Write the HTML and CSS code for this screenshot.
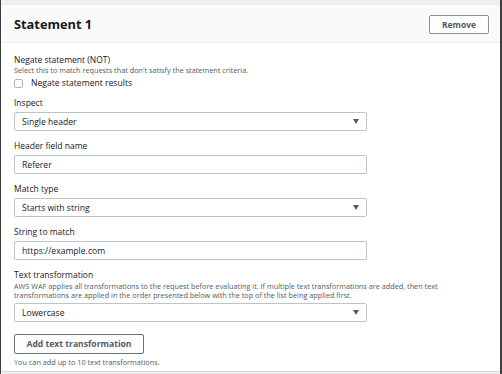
FILE: index.html
```html
<!DOCTYPE html>
<html>
<head>
<meta charset="utf-8">
<link rel="stylesheet" href="styles.css">
</head>
<body>
<div class="frame">
  <div class="card">
    <div class="card-header">
      <h2 class="title">Statement 1</h2>
      <button class="btn btn-small">Remove</button>
    </div>
    <div class="card-body">
      <div class="group">
        <div class="label">Negate statement (NOT)</div>
        <div class="desc">Select this to match requests that don't satisfy the statement criteria.</div>
        <label class="check-row"><span class="checkbox"></span><span class="check-label">Negate statement results</span></label>
      </div>
      <div class="field">
        <div class="label">Inspect</div>
        <div class="control select"><span>Single header</span><span class="caret"></span></div>
      </div>
      <div class="field">
        <div class="label">Header field name</div>
        <div class="control"><span>Referer</span></div>
      </div>
      <div class="field">
        <div class="label">Match type</div>
        <div class="control select"><span>Starts with string</span><span class="caret"></span></div>
      </div>
      <div class="field">
        <div class="label">String to match</div>
        <div class="control"><span>https://example.com</span></div>
      </div>
      <div class="field">
        <div class="label">Text transformation</div>
        <div class="desc desc-long">AWS WAF applies all transformations to the request before evaluating it. If multiple text transformations are added, then text transformations are applied in the order presented below with the top of the list being applied first.</div>
        <div class="control select"><span>Lowercase</span><span class="caret"></span></div>
      </div>
      <div class="add-block">
        <button class="btn btn-add">Add text transformation</button>
        <div class="desc hint">You can add up to 10 text transformations.</div>
      </div>
    </div>
  </div>
</div>
</body>
</html>
```

FILE: styles.css
```css
* { box-sizing: border-box; }
html, body { margin: 0; padding: 0; }
body {
  width: 502px;
  height: 374px;
  overflow: hidden;
  font-family: "Open Sans", "Noto Sans", sans-serif;
  color: #16191f;
  background: #ffffff;
}
.frame {
  height: 374px;
  padding-top: 5px;
  background: #eef0f0;
  border-left: 1px solid #3d3d3d;
  border-right: 2px solid #3d3d3d;
  display: flex;
  flex-direction: column;
}
.card {
  background: #ffffff;
  height: 367px;
  border-bottom: 1px solid #d5dbdb;
}
.card-header {
  height: 38px;
  background: #fafafa;
  border-bottom: 1px solid #eaeded;
  display: flex;
  align-items: center;
  justify-content: space-between;
  padding: 0 11px 0 13px;
}
.title {
  margin: 0;
  font-size: 12.8px;
  font-weight: 700;
  line-height: 16px;
}
.btn {
  font-family: "Open Sans", "Noto Sans", sans-serif;
  background: #ffffff;
  border: 1px solid #879596;
  border-radius: 2px;
  color: #545b64;
  font-weight: 700;
  padding: 0;
  cursor: pointer;
}
.btn-small {
  width: 60px;
  height: 19px;
  font-size: 8.5px;
  margin-top: 1px;
}
.card-body {
  padding: 11px 0 0 13px;
  display: flex;
  flex-direction: column;
  gap: 9px;
}
.label {
  font-size: 8.5px;
  line-height: 12px;
}
.desc {
  font-size: 7.3px;
  line-height: 9px;
  color: #545b64;
}
.check-row {
  display: flex;
  align-items: center;
  gap: 8px;
  margin-top: 3px;
  height: 10px;
}
.checkbox {
  width: 9px;
  height: 9px;
  border: 1px solid #aab7b8;
  border-radius: 2px;
  background: #fff;
}
.check-label {
  font-size: 8.6px;
  line-height: 10px;
}
.field {
  display: flex;
  flex-direction: column;
  width: 353px;
}
.field .label { margin-bottom: 3px; }
.control {
  height: 19px;
  border: 1px solid #bcc6c6;
  border-radius: 2px;
  display: flex;
  align-items: center;
  justify-content: space-between;
  padding: 0 7px 0 7px;
  font-size: 8.6px;
}
.caret {
  width: 0;
  height: 0;
  border-left: 3.5px solid transparent;
  border-right: 3.5px solid transparent;
  border-top: 5px solid #545b64;
}
.desc-long {
  width: 450px;
  margin: -2px 0 3px;
}
.add-block {
  display: flex;
  flex-direction: column;
  align-items: flex-start;
  margin-top: 3px;
}
.btn-add {
  width: 130px;
  height: 20px;
  font-size: 8.6px;
  color: #545b64;
  border-color: #687078;
}
.hint {
  margin-top: 4px;
}
```
